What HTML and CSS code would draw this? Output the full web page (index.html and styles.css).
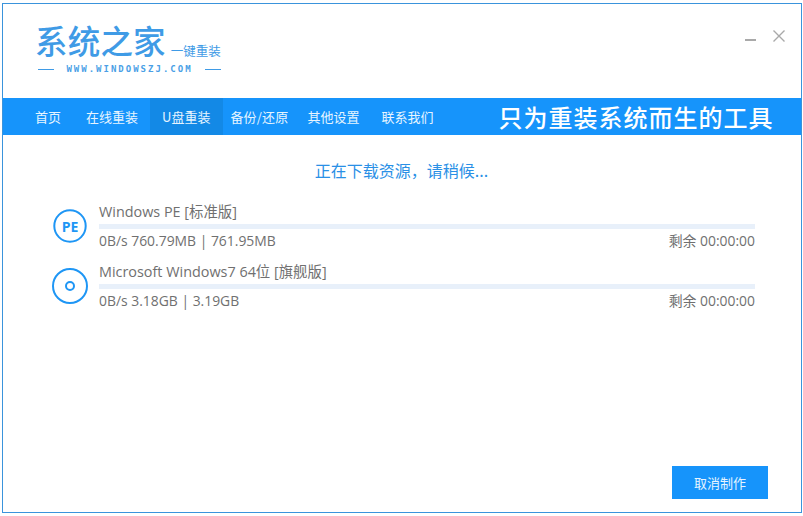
FILE: index.html
```html
<!DOCTYPE html>
<html lang="zh">
<head>
<meta charset="utf-8">
<title>系统之家一键重装</title>
<link rel="stylesheet" href="styles.css">
</head>
<body>
<div class="window">
  <header class="header">
    <div class="logo">
      <div class="logo-top">
        <span class="logo-name">系统之家</span>
        <span class="logo-sub">一键重装</span>
      </div>
      <div class="logo-url">
        <i class="dash"></i>
        <span>WWW.WINDOWSZJ.COM</span>
        <i class="dash"></i>
      </div>
    </div>
    <div class="controls">
      <svg class="ctl" width="12" height="12" viewBox="0 0 12 12"><path d="M0 10H11" stroke="#a9a9a9" stroke-width="2"/></svg>
      <svg class="ctl" width="12" height="12" viewBox="0 0 12 12"><path d="M0.5 0.5L11.5 11.5M11.5 0.5L0.5 11.5" stroke="#a9a9a9" stroke-width="1.4"/></svg>
    </div>
  </header>
  <nav class="nav">
    <a class="nav-item home">首页</a>
    <a class="nav-item online">在线重装</a>
    <a class="nav-item usb active">U盘重装</a>
    <a class="nav-item backup">备份/还原</a>
    <a class="nav-item other">其他设置</a>
    <a class="nav-item contact">联系我们</a>
    <span class="slogan">只为重装系统而生的工具</span>
  </nav>
  <main class="main">
    <h1 class="title">正在下载资源，请稍候...</h1>
    <section class="items">
      <div class="item">
        <div class="icon-cell">
          <svg width="36" height="36" viewBox="0 0 36 36"><circle cx="18" cy="18" r="15.7" fill="none" stroke="#1e96f5" stroke-width="2"/><text x="18" y="23.5" text-anchor="middle" class="pe">PE</text></svg>
        </div>
        <div class="info">
          <div class="name">Windows PE [标准版]</div>
          <div class="bar"></div>
          <div class="stats"><span>0B/s 760.79MB | 761.95MB</span><span>剩余 00:00:00</span></div>
        </div>
      </div>
      <div class="item">
        <div class="icon-cell">
          <svg width="36" height="36" viewBox="0 0 36 36"><circle cx="18" cy="18" r="17" fill="none" stroke="#1e96f5" stroke-width="2"/><circle cx="18" cy="18" r="4" fill="none" stroke="#1e96f5" stroke-width="2"/></svg>
        </div>
        <div class="info">
          <div class="name">Microsoft Windows7 64位 [旗舰版]</div>
          <div class="bar"></div>
          <div class="stats"><span>0B/s 3.18GB | 3.19GB</span><span>剩余 00:00:00</span></div>
        </div>
      </div>
    </section>
    <div class="actions"><button class="cancel">取消制作</button></div>
  </main>
</div>
</body>
</html>
```
FILE: styles.css
```css
* { box-sizing: border-box; }
html, body { margin: 0; height: 100%; background: #fff; }
body {
  padding: 3px 1px 2px 2px;
  font-family: "Noto Sans CJK SC", "Open Sans", sans-serif;
  color: #666;
}
.window {
  height: 510px;
  border: 1px solid #3a94dc;
  display: flex;
  flex-direction: column;
  background: #fff;
}
.header {
  height: 94px;
  display: flex;
  justify-content: space-between;
  padding: 15px 16px 0 34px;
}
.logo { width: 184px; }
.logo-top { display: flex; align-items: flex-end; height: 41px; margin-left: -2px; }
.logo-name {
  font-size: 32.5px;
  line-height: 41px;
  letter-spacing: 0.2px;
  font-weight: 500;
  color: #3f9be6;
  white-space: nowrap;
}
.logo-sub {
  font-size: 12.5px;
  line-height: 18px;
  letter-spacing: 0;
  color: #3f9be6;
  margin-left: 5px;
  white-space: nowrap;
}
.logo-url {
  display: flex;
  align-items: center;
  justify-content: space-between;
  margin: 3px 0 0 1px;
  font-family: "DejaVu Sans Mono", monospace;
  font-size: 9px;
  line-height: 12px;
  font-weight: 700;
  letter-spacing: 2px;
  color: #4a9fe6;
}
.dash { width: 16px; height: 1px; background: #3f9be6; }
.controls { display: flex; gap: 16px; padding-top: 11px; height: 40px; }
.nav {
  height: 37px;
  background: #1694fb;
  display: flex;
  align-items: stretch;
  font-size: 13px;
}
.nav-item {
  display: flex;
  align-items: center;
  color: #e6f4ff;
  white-space: nowrap;
}
.home { margin-left: 32px; }
.online { margin-left: 25px; }
.usb { margin-left: 12px; padding: 0 13px 0 12px; }
.backup { margin-left: 7px; letter-spacing: 0.2px; }
.other { margin-left: 19px; }
.contact { margin-left: 22px; }
.active { background: #1389e6; }
.slogan {
  align-self: center;
  margin-left: 65px;
  font-size: 24px;
  letter-spacing: 1px;
  line-height: 30px;
  font-weight: 500;
  color: #fff;
  white-space: nowrap;
}
.main {
  flex: 1;
  display: flex;
  flex-direction: column;
  padding: 24px 46px 13px 49px;
}
.title {
  margin: 0;
  font-size: 16px;
  line-height: 22px;
  font-weight: 400;
  color: #2a90e6;
  text-align: center;
  padding-right: 4px;
}
.items { margin-top: 20px; display: flex; flex-direction: column; gap: 10px; }
.item { display: flex; height: 50px; align-items: center; }
.icon-cell { width: 36px; height: 36px; margin-right: 11px; flex: none; }
.icon-cell svg { display: block; }
.pe { font: 700 14px "Open Sans", sans-serif; fill: #1e96f5; }
.info { flex: 1; font-family: "Open Sans", "Noto Sans CJK SC", sans-serif; }
.name { font-size: 14.4px; line-height: 20px; margin-top: 1px; color: #707070; }
.bar { height: 5px; margin-top: 2px; background: #e8f0fa; }
.stats {
  display: flex;
  justify-content: space-between;
  font-size: 13.9px;
  line-height: 20px;
  margin-top: 2px;
  color: #707070;
}
.actions { margin-top: auto; display: flex; justify-content: flex-end; margin-right: -13px; }
.cancel {
  width: 96px;
  height: 33px;
  border: 0;
  background: #1694fb;
  color: #e6f4ff;
  font: inherit;
  font-size: 13px;
  padding: 0;
}
```
